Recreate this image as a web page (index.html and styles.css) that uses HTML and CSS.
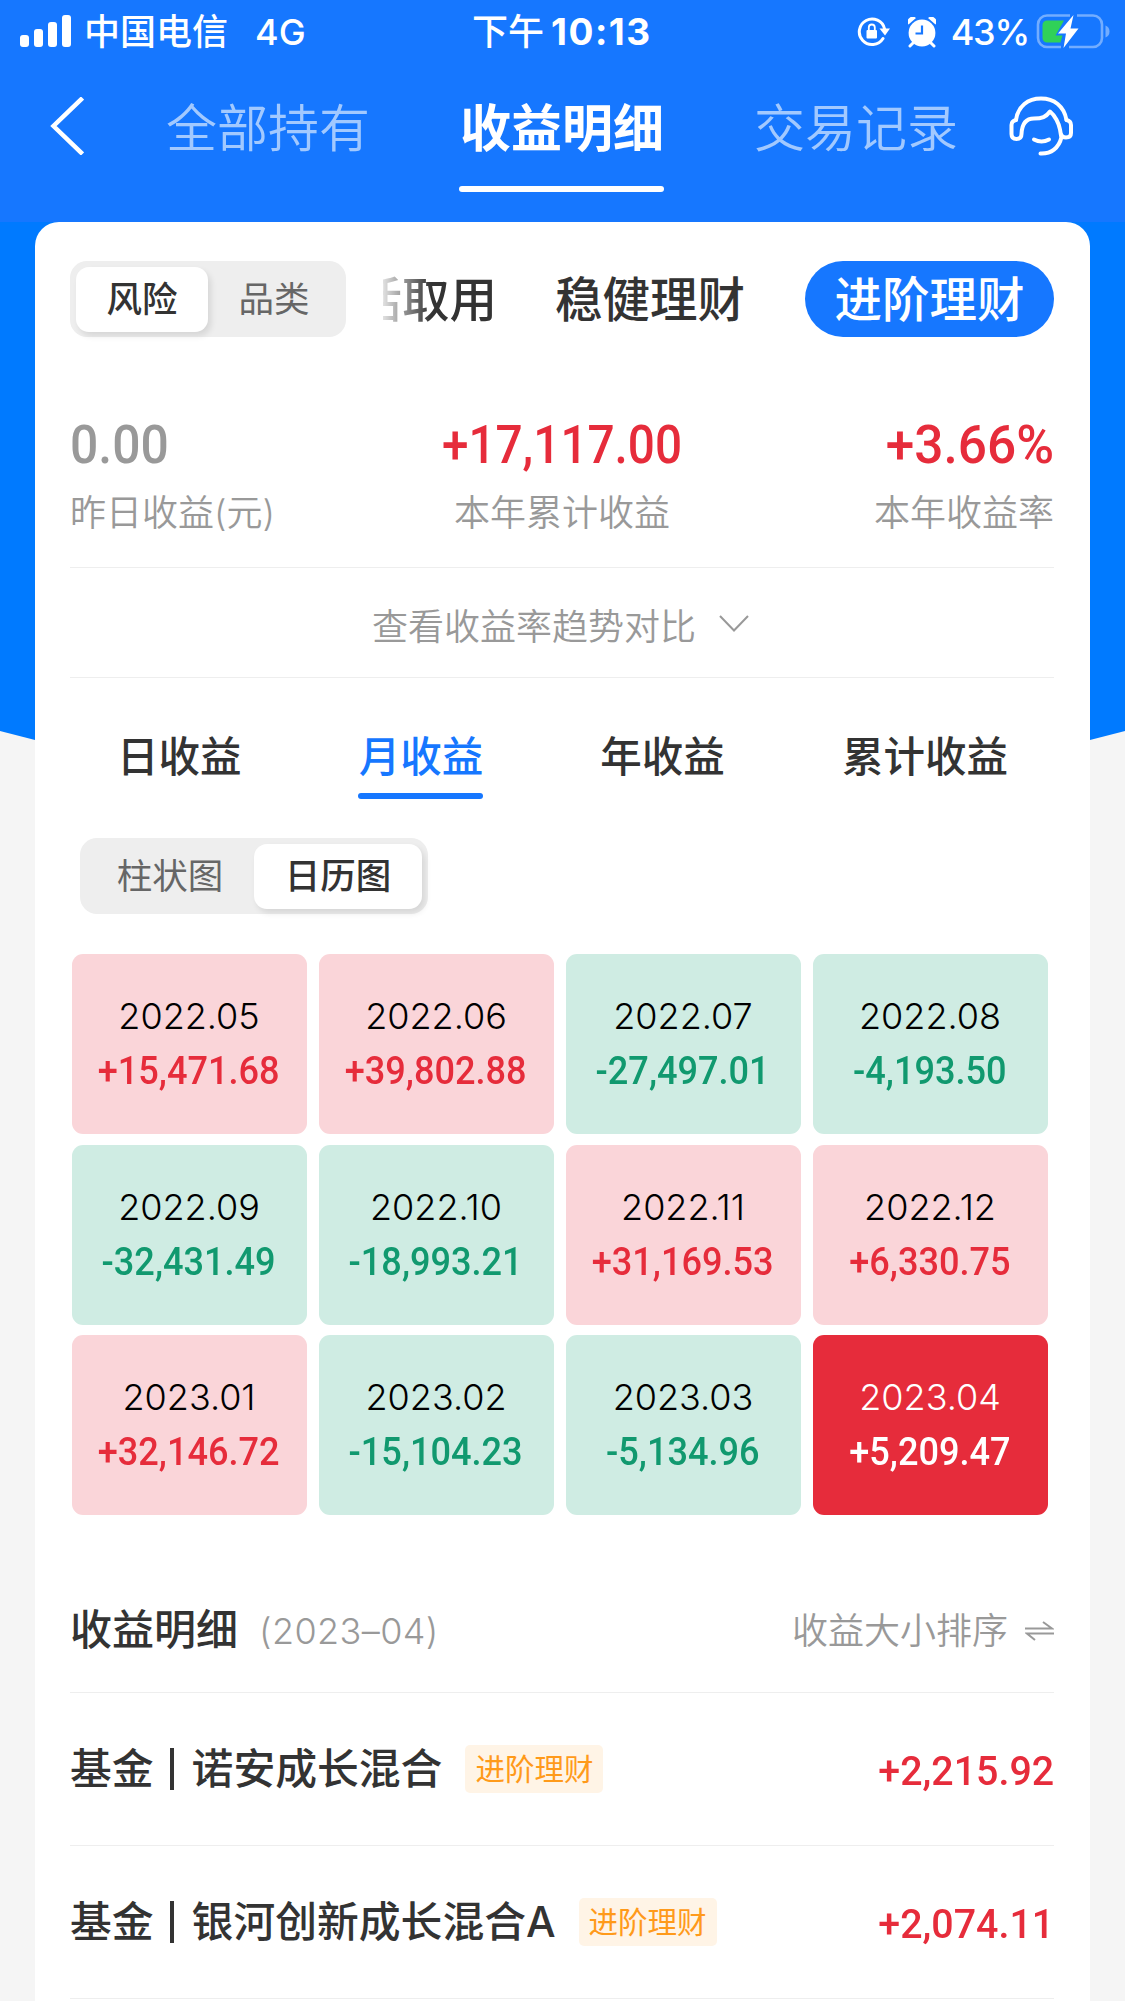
FILE: index.html
```
<!DOCTYPE html>
<html lang="zh-CN">
<head>
  <meta charset="UTF-8">
  <meta name="viewport" content="width=device-width, initial-scale=1.0">
  <title>收益明细</title>
  <link rel="stylesheet" href="styles.css">
</head>
<body>
  <header class="header">
    <div class="status-bar">
      <div class="status-left">
        <svg class="signal" width="52" height="33" viewBox="0 0 52 33" fill="#fff">
          <rect x="0" y="20" width="9" height="12" rx="3"/>
          <rect x="14" y="14" width="9" height="18" rx="3"/>
          <rect x="28" y="7" width="9" height="25" rx="3"/>
          <rect x="42" y="0" width="9" height="32" rx="3"/>
        </svg>
        <span class="carrier">中国电信</span>
        <span class="network">4G</span>
      </div>
      <div class="status-time">下午<b>10:13</b></div>
      <div class="status-right">
        <svg class="lock" width="34" height="32" viewBox="0 0 34 32">
          <path d="M26 22.500A12.800 12.800 0 1 1 27.600 13" fill="none" stroke="#fff" stroke-width="3" stroke-linecap="round"/>
          <path d="M22.500 12.500H33L28 19.500z" fill="#fff"/>
          <rect x="9.500" y="14" width="10.500" height="8.500" rx="1" fill="#fff"/>
          <path d="M11.800 14V11.500a3 3 0 0 1 6 0V14" fill="none" stroke="#fff" stroke-width="1.800"/>
        </svg>
        <svg class="alarm" width="28" height="31" viewBox="0 0 28 31">
          <circle cx="14" cy="16" r="13.400" fill="#fff"/>
          <path d="M0.500 7.500A5 5 0 0 1 8 1zM27.500 7.500A5 5 0 0 0 20 1z" fill="#fff"/>
          <path d="M5 26l-3 3M23 26l3 3" stroke="#fff" stroke-width="3" stroke-linecap="round"/>
          <path d="M14 8.500V16.500H7.500" fill="none" stroke="#1677ff" stroke-width="2.200"/>
        </svg>
        <span class="percent">43%</span>
        <svg class="battery" width="74" height="36" viewBox="0 0 74 36">
          <path d="M34 1.500H11a9 9 0 0 0-9 9V24a9 9 0 0 0 9 9H25M41 1.500H57a9 9 0 0 1 9 9V24a9 9 0 0 1-9 9H33" fill="none" stroke="#73adff" stroke-width="2.600"/>
          <path d="M69.500 11.500q4 1.500 4 6t-4 6z" fill="#73adff"/>
          <path d="M11 6.500H28L19.500 21.500H26.500L24.500 28.500H11a4.500 4.500 0 0 1-4.500-4.500V11a4.500 4.500 0 0 1 4.500-4.500z" fill="#30d158"/>
          <path d="M37.500 1L22 19.500H30L27.500 34L42.500 14.500H34.500z" fill="#fff"/>
        </svg>
      </div>
    </div>
    <nav class="nav">
      <svg class="back" width="34" height="58" viewBox="0 0 34 58">
        <path d="M32.500 1L3.500 29L32.500 57" fill="none" stroke="#fff" stroke-width="4.500"/>
      </svg>
      <a class="nav-item">全部持有</a>
      <a class="nav-item active">收益明细</a>
      <a class="nav-item">交易记录</a>
      <svg class="service" width="66" height="62" viewBox="0 0 66 62" fill="none" stroke="#fff" stroke-width="4" stroke-linecap="round" stroke-linejoin="round">
        <path d="M7 24C9 10 19 2.500 32 2.500S55 10 57.500 24"/>
        <path d="M7 24q-4.500 1-4.500 5v9q0 5 5 5t5-5C13 26 18 22.500 25 22.500 33 22.500 37 21 41 15.500c5 4 9 12 10 18l1 6"/>
        <path d="M57.500 24q4.500 1 4.500 5v8q0 4.500-5 4.500-4 0-5-3"/>
        <path d="M52.500 41C50 52 42 58 31.500 57.500"/>
        <path d="M25 43.500q7.500 4 15 0"/>
      </svg>
    </nav>
  </header>

  <main class="main">
    <div class="card">
      <div class="filter">
        <div class="toggle">
          <span class="toggle-item active">风险</span>
          <span class="toggle-item">品类</span>
        </div>
        <div class="types">
          <div class="type-clip"><span>活取用</span></div>
          <span class="type">稳健理财</span>
          <span class="type active">进阶理财</span>
        </div>
      </div>

      <div class="stats">
        <div class="stat left">
          <div class="stat-value gray">0.00</div>
          <div class="stat-label">昨日收益(元)</div>
        </div>
        <div class="stat">
          <div class="stat-value">+17,117.00</div>
          <div class="stat-label">本年累计收益</div>
        </div>
        <div class="stat right">
          <div class="stat-value">+3.66%</div>
          <div class="stat-label">本年收益率</div>
        </div>
      </div>

      <div class="trend">
        <span>查看收益率趋势对比</span>
        <svg width="32" height="20" viewBox="0 0 32 20">
          <path d="M2 2L16 16.500L30 2" fill="none" stroke="#999" stroke-width="2"/>
        </svg>
      </div>

      <div class="tabs">
        <span class="tab">日收益</span>
        <span class="tab active">月收益</span>
        <span class="tab">年收益</span>
        <span class="tab">累计收益</span>
      </div>

      <div class="toggle chart-toggle">
        <span class="toggle-item">柱状图</span>
        <span class="toggle-item active">日历图</span>
      </div>

      <div class="calendar">
        <div class="month up"><span>2022.05</span><b>+15,471.68</b></div>
        <div class="month up"><span>2022.06</span><b>+39,802.88</b></div>
        <div class="month down"><span>2022.07</span><b>-27,497.01</b></div>
        <div class="month down"><span>2022.08</span><b>-4,193.50</b></div>
        <div class="month down"><span>2022.09</span><b>-32,431.49</b></div>
        <div class="month down"><span>2022.10</span><b>-18,993.21</b></div>
        <div class="month up"><span>2022.11</span><b>+31,169.53</b></div>
        <div class="month up"><span>2022.12</span><b>+6,330.75</b></div>
        <div class="month up"><span>2023.01</span><b>+32,146.72</b></div>
        <div class="month down"><span>2023.02</span><b>-15,104.23</b></div>
        <div class="month down"><span>2023.03</span><b>-5,134.96</b></div>
        <div class="month selected"><span>2023.04</span><b>+5,209.47</b></div>
      </div>

      <div class="detail-head">
        <h2>收益明细</h2>
        <span class="detail-month">(2023–04)</span>
        <span class="sort">收益大小排序</span>
        <svg class="sort-icon" width="29" height="20" viewBox="0 0 29 20" fill="none" stroke="#999" stroke-width="2">
          <path d="M0 7.500H27L18 1M29 12.500H2L10 19"/>
        </svg>
      </div>

      <div class="fund">
        <span class="fund-kind">基金</span>
        <span class="fund-name">诺安成长混合</span>
        <span class="tag">进阶理财</span>
        <span class="amount">+2,215.92</span>
      </div>
      <div class="fund">
        <span class="fund-kind">基金</span>
        <span class="fund-name">银河创新成长混合A</span>
        <span class="tag">进阶理财</span>
        <span class="amount">+2,074.11</span>
      </div>
    </div>
  </main>
</body>
</html>
```
FILE: styles.css
```
* {
  box-sizing: border-box;
}
body {
  margin: 0;
  height: 2001px;
  overflow: hidden;
  background: #f5f5f5;
  color: #333;
  font-family: Inter, "Noto Sans CJK SC", sans-serif;
  white-space: nowrap;
}
svg {
  display: block;
  flex: none;
}
.header {
  height: 222px;
  background: #1677ff;
  color: #fff;
}

/* status bar */
.status-bar {
  display: grid;
  grid-template-columns: 472px 1fr auto;
  height: 62px;
  padding-right: 15px;
  font-size: 36px;
  font-weight: 500;
  line-height: 63px;
}
.status-left,
.status-right {
  display: flex;
  align-items: center;
}
.signal {
  margin: 0 12px 2px 20px;
}
.network {
  margin-left: 27px;
}
.status-time b {
  margin-left: 7px;
  font-size: 37px;
  font-weight: 700;
  letter-spacing: 1.500px;
}
.alarm {
  margin: 0 15px 0 17px;
}
.percent {
  margin-right: 7px;
  letter-spacing: -1.200px;
}

/* top navigation */
.nav {
  display: flex;
  height: 130px;
  padding-left: 50px;
  font-size: 51px;
}
.back {
  margin: 35px 82px 0 0;
}
.nav-item {
  position: relative;
  height: 130px;
  line-height: 133px;
  margin-right: 90px;
  color: #a2c9ff;
  font-weight: 350;
}
.nav-item.active {
  color: #fff;
  font-weight: 700;
}
.nav-item.active::after,
.tab.active::after {
  content: "";
  position: absolute;
  left: -1px;
  right: 0;
  bottom: 0;
  height: 6px;
  border-radius: 3px;
  background: currentColor;
}
.service {
  margin-top: 34px;
  margin-left: -39px;
}

.main {
  position: relative;
  padding: 0 35px;
}
/* blue backdrop with a curved bottom edge */
.main::before {
  content: "";
  position: absolute;
  z-index: -1;
  top: 0;
  left: 0;
  width: 100%;
  height: 530px;
  background: #007aff;
  clip-path: polygon(0 0, 100% 0, 100% 509px, 1090px 518px, 35px 518px, 0 509px);
}
.card {
  height: 1779px;
  padding: 39px 36px 0 35px;
  border-radius: 24px 24px 0 0;
  background: #fff;
}

/* segmented switch */
.toggle {
  display: flex;
  height: 76px;
  padding: 6px;
  border-radius: 17px;
  background: #eee;
  font-size: 35.500px;
  line-height: 66px;
  text-align: center;
  color: #666;
}
.toggle-item {
  flex: 1;
  height: 65px;
}
.toggle-item.active {
  border-radius: 13px;
  background: #fff;
  box-shadow: 3px 4px 6px rgba(0, 0, 0, 0.1);
  color: #333;
  font-weight: 500;
}
.filter {
  display: flex;
  justify-content: space-between;
  height: 76px;
}
.filter .toggle {
  width: 276px;
}
.types {
  display: flex;
  font-size: 47.500px;
  font-weight: 500;
  line-height: 78px;
}
.type-clip {
  display: flex;
  justify-content: flex-end;
  width: 114px;
  overflow: hidden;
  -webkit-mask-image: linear-gradient(90deg, rgba(0, 0, 0, 0.15), #000 48px);
  mask-image: linear-gradient(90deg, rgba(0, 0, 0, 0.15), #000 48px);
}
.type {
  margin-left: 58px;
}
.type.active {
  width: 249px;
  height: 76px;
  margin-left: 60px;
  border-radius: 38px;
  background: #1677ff;
  color: #fff;
  text-align: center;
}

/* summary */
.stats {
  display: flex;
  height: 231px;
  padding-top: 78px;
  border-bottom: 1px solid #eee;
  text-align: center;
}
.stat {
  flex: 1;
}
.stat.left {
  text-align: left;
}
.stat.right {
  text-align: right;
}
/* narrow digits */
.stat-value {
  height: 60px;
  color: #e62c3b;
  font: 500 53px/60px Roboto, sans-serif;
  transform: scaleX(0.9);
}
.left .stat-value {
  color: #999;
  transform: scaleX(0.94);
  transform-origin: left;
}
.right .stat-value {
  transform: scaleX(0.97);
  transform-origin: right;
}
.stat-label {
  margin-top: 12px;
  color: #999;
  font-size: 36px;
  font-weight: 350;
  line-height: 52px;
}
.trend {
  display: flex;
  align-items: center;
  justify-content: center;
  gap: 22px;
  height: 110px;
  padding: 3px 2px 0 0;
  border-bottom: 1px solid #eee;
  color: #999;
  font-size: 36px;
  font-weight: 350;
}

/* period tabs */
.tabs {
  display: flex;
  padding: 37px 46px 0 47px;
  justify-content: space-between;
  font-size: 41.500px;
  font-weight: 500;
  line-height: 84px;
}
.tab {
  position: relative;
  height: 84px;
}
.tab.active {
  color: #1677ff;
}
.chart-toggle {
  width: 348px;
  margin: 39px 0 40px 10px;
}

/* monthly calendar */
.calendar {
  display: grid;
  grid-template-columns: repeat(4, 235px);
  grid-auto-rows: 180px;
  gap: 10.500px 12px;
  margin-left: 1.500px;
}
.month {
  display: flex;
  flex-direction: column;
  align-items: center;
  padding-top: 34px;
  border-radius: 11px;
  color: #000;
}
.month span {
  font-size: 36px;
  font-weight: 300;
  line-height: 56px;
}
.month b {
  font: 500 38px/54px Roboto, sans-serif;
  transform: scaleX(0.95);
}
.up {
  background: #fad5d9;
}
.up b {
  color: #e62c3b;
}
.down {
  background: #cfece3;
}
.down b {
  color: #11996f;
}
.selected {
  background: #e62c3b;
  color: #fff;
}

/* detail list */
.detail-head {
  display: flex;
  align-items: center;
  height: 178px;
  padding-top: 54px;
  border-bottom: 1px solid #eee;
  color: #999;
  font-size: 36px;
  font-weight: 350;
  line-height: 60px;
}
.detail-head h2 {
  margin: 0 21px 1px 0;
  color: #333;
  font-size: 42px;
  font-weight: 500;
}
.detail-month {
  margin-top: 1px;
  font-weight: 300;
  letter-spacing: 0.400px;
}
.sort {
  margin: 0 17px 0 auto;
}
.fund {
  display: flex;
  align-items: center;
  height: 153px;
  border-bottom: 1px solid #eee;
  font-size: 41.800px;
  font-weight: 500;
  line-height: 60px;
}
.fund-kind,
.fund-name {
  margin-bottom: 1px;
}
.fund-kind {
  display: flex;
  align-items: center;
}
.fund-kind::after {
  content: "";
  width: 4px;
  height: 42px;
  margin: 0 18px 0 16px;
  background: #333;
}
.tag {
  width: 138px;
  height: 48px;
  margin: 0 0 1px 23px;
  border-radius: 5px;
  background: #fff4e6;
  color: #ff9a1a;
  font-size: 29.500px;
  font-weight: 400;
  line-height: 48px;
  text-align: center;
}
.amount {
  margin: 4px 0 0 auto;
  color: #e62c3b;
  font: 500 41px/50px Roboto, sans-serif;
  transform: scaleX(0.96);
  transform-origin: right;
}
```
